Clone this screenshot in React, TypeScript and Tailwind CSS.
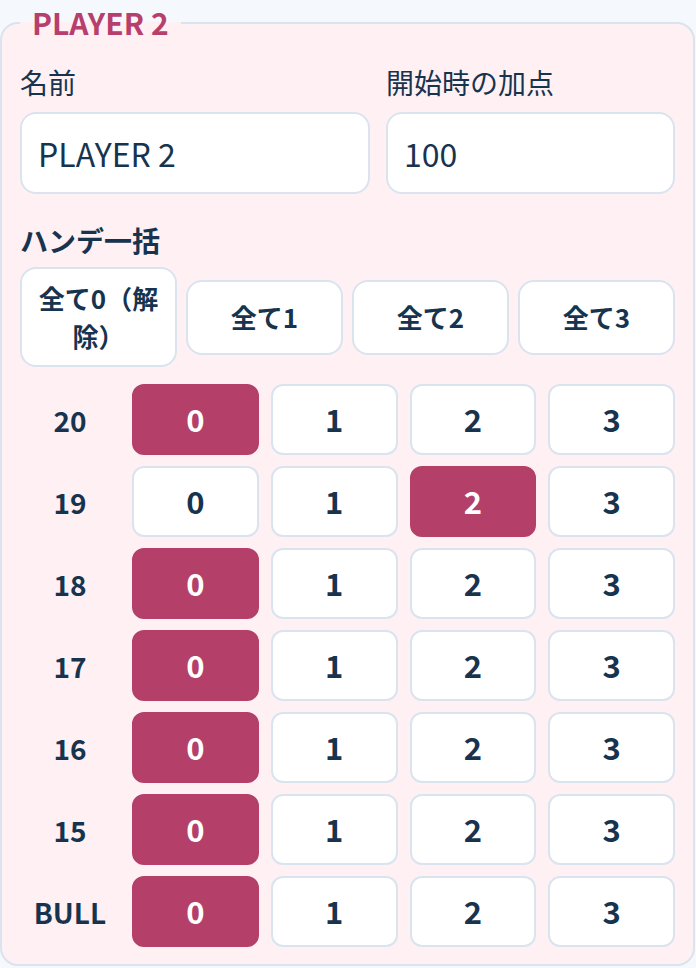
import { useState } from 'react';

const ROWS = ['20', '19', '18', '17', '16', '15', 'BULL'];
const INITIAL: Record<string, number> = { '20': 0, '19': 2, '18': 0, '17': 0, '16': 0, '15': 0, BULL: 0 };

const BULK = ['全て0（解除）', '全て1', '全て2', '全て3'];

export default function App() {
  const [handi, setHandi] = useState<Record<string, number>>(INITIAL);

  return (
    <div className="min-h-[968px] w-[696px] bg-[#f5f9fe] font-['Noto_Sans_CJK_JP','Noto_Sans',sans-serif] text-[#17344f]">
      <fieldset className="w-[695px] min-w-0 rounded-[18px] border-2 border-[#d9e4ef] bg-[#fff0f4] px-[18px] pt-[16px] pb-[17px]">
        <legend className="px-3 text-[30px] font-bold leading-[45px] text-[#b63f6b]">PLAYER 2</legend>

        {/* Name + start bonus */}
        <div className="grid grid-cols-[350px_minmax(0,1fr)] gap-4">
          <label className="flex min-w-0 flex-col">
            <span className="mb-[9px] text-[28px] leading-[42px]">名前</span>
            <input
              defaultValue="PLAYER 2"
              className="h-[82px] w-full min-w-0 rounded-[16px] border-2 border-[#d9e4ef] bg-white px-[16px] text-[32px] text-[#17344f] outline-none"
            />
          </label>
          <label className="flex min-w-0 flex-col">
            <span className="mb-[9px] text-[28px] leading-[42px]">開始時の加点</span>
            <input
              defaultValue="100"
              className="h-[82px] w-full min-w-0 rounded-[16px] border-2 border-[#d9e4ef] bg-white px-[16px] text-[32px] text-[#17344f] outline-none"
            />
          </label>
        </div>

        {/* Bulk handicap */}
        <div className="mt-[25px] mb-[6px] text-[28px] font-bold leading-[42px]">ハンデ一括</div>
        <div className="grid grid-cols-[repeat(4,minmax(0,1fr))] items-center gap-[9px]">
          {BULK.map((b, i) => (
            <button
              key={b}
              onClick={() => setHandi(Object.fromEntries(ROWS.map(r => [r, i])))}
              className="min-h-[75px] min-w-0 rounded-[16px] border-2 border-[#d9e4ef] bg-white px-3 py-[10px] text-[26px] font-bold leading-[38px] text-[#17344f]"
            >
              {b}
            </button>
          ))}
        </div>

        {/* Per-number handicap */}
        <div className="mt-[17px] grid grid-cols-[100px_repeat(4,minmax(0,1fr))] gap-x-3 gap-y-[11px]">
          {ROWS.map(r => (
            <div key={r} className="contents">
              <div className="flex items-center justify-center text-[28px] font-bold">{r}</div>
              {[0, 1, 2, 3].map(v => {
                const on = handi[r] === v;
                return (
                  <button
                    key={v}
                    onClick={() => setHandi({ ...handi, [r]: v })}
                    className={
                      on
                        ? 'h-[71px] min-w-0 rounded-[12px] border-2 border-[#b43f69] bg-[#b43f69] text-[31px] font-bold text-white'
                        : 'h-[71px] min-w-0 rounded-[12px] border-2 border-[#d9e4ef] bg-white text-[31px] font-bold text-[#17344f]'
                    }
                  >
                    {v}
                  </button>
                );
              })}
            </div>
          ))}
        </div>
      </fieldset>
    </div>
  );
}
